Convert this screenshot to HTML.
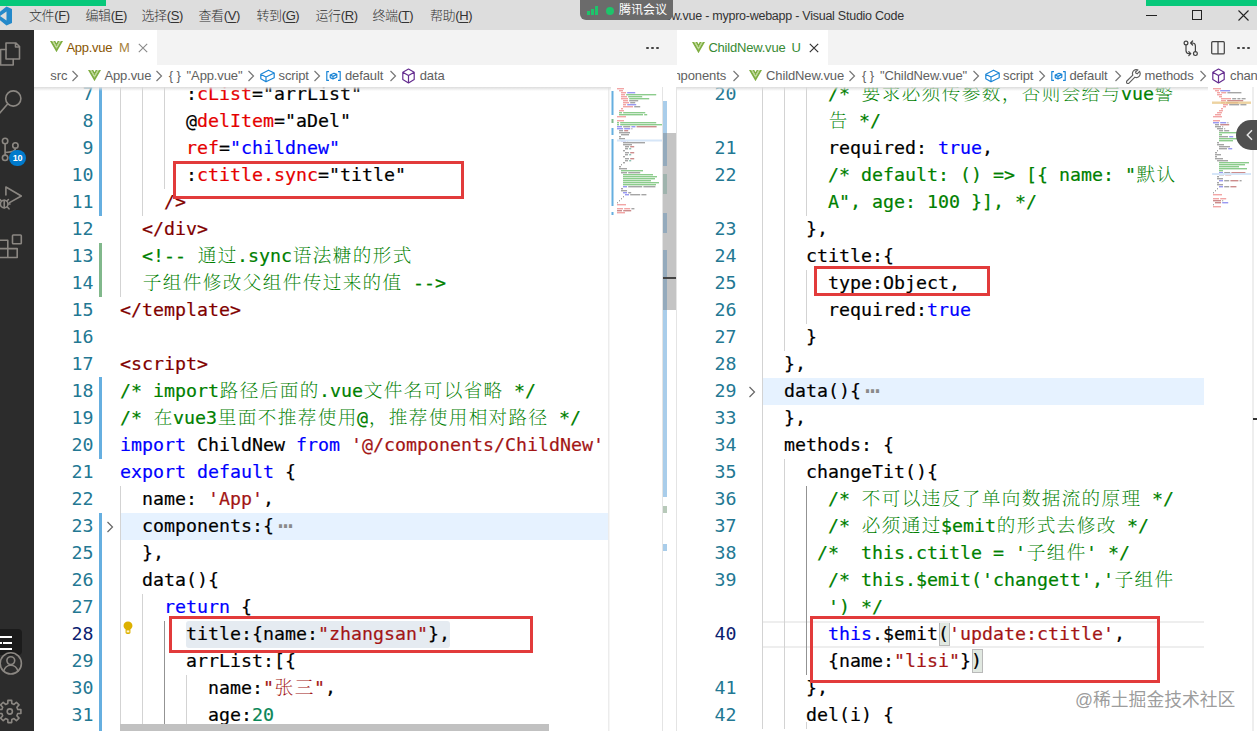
<!DOCTYPE html>
<html lang="zh-CN">
<head>
<meta charset="utf-8">
<title>ChildNew.vue - mypro-webapp - Visual Studio Code</title>
<style>
html,body{margin:0;padding:0}
body{width:1257px;height:731px;overflow:hidden;position:relative;background:#fff;
 font-family:"Liberation Sans","Noto Sans CJK SC",sans-serif;color:#333}
div,span{box-sizing:border-box}
.abs{position:absolute}
/* title bar */
#titlebar{position:absolute;left:0;top:0;width:1257px;height:30px;background:#dddddd}
.menu{position:absolute;top:6px;font-size:13px;line-height:20px;color:#333;font-weight:300;white-space:nowrap;letter-spacing:-0.4px}
.menu u{text-decoration:underline;text-underline-offset:2px}
#wtitle{position:absolute;top:7px;left:628.5px;font-size:12.5px;letter-spacing:-0.25px;line-height:18px;color:#333;white-space:nowrap}
.gbar{position:absolute;top:0;height:5.6px;background:#07c87a}
#meet{position:absolute;left:580px;top:0;width:93px;height:20px;background:#6b6b6b;border-radius:0 0 6px 6px;color:#fff;font-size:12px;line-height:21px;white-space:nowrap}
/* activity bar */
#activity{position:absolute;left:0;top:30px;width:34px;height:701px;background:#2c2c2c;overflow:hidden}
/* tabs */
.tabs{position:absolute;top:30px;height:35px;background:#f3f3f3}
.tab{position:absolute;top:0;height:35px;background:#fff;font-size:13px;line-height:35px;white-space:nowrap}
.crumbs{position:absolute;top:65px;height:22px;background:#fff;font-size:13px;letter-spacing:-0.12px;line-height:22px;color:#616161;white-space:nowrap;overflow:hidden}
.crumbs span.t{position:absolute;top:0}
/* editor */
#ed{position:absolute;left:0;top:87px;width:1257px;height:644px;overflow:hidden}
#edin{position:absolute;left:0;top:-87px;width:1257px;height:731px}
.cl{position:absolute;height:27px;line-height:27px;white-space:pre;font-family:"DejaVu Sans Mono","Noto Serif CJK SC",monospace;font-size:18.27px;color:#000;-webkit-text-stroke:0.2px}
.ln{position:absolute;width:60px;height:27px;line-height:27px;text-align:right;font-family:"DejaVu Sans Mono",monospace;font-size:18.27px;color:#237893}
.ln.act{color:#0b216f}
.k{color:#000}.r{color:#e50000}.b{color:#0000ff}.m{color:#800000}.g{color:#008000}.s{color:#a31515}.n{color:#098658}
.gc{color:#008000;font-size:18.6px;letter-spacing:1.4px;position:relative;left:0.7px;line-height:0;font-weight:200;-webkit-text-stroke:0;font-family:"Noto Serif CJK SC",serif}
.sc{color:#a31515;font-size:18.6px;letter-spacing:1.4px;position:relative;left:0.7px;line-height:0;font-weight:200;-webkit-text-stroke:0;font-family:"Noto Serif CJK SC",serif}
.f{color:#8a8a8a;font-size:25px;line-height:0;margin-left:4px;position:relative;top:2.5px;-webkit-text-stroke:0}
.ig{position:absolute;width:1px;background:#d3d3d3}
.ig.act{background:#939393}
.hl{position:absolute;height:27px}
.redbox{position:absolute;border:3px solid #e23b3b}
.bar{position:absolute;width:3px}
.dot{position:absolute;left:0;top:0;width:2.6px;height:2.6px;border-radius:50%;background:#424242}
</style>
</head>
<body>
<div id="ed"><div id="edin">
<!-- left pane decorations -->
<div class="hl" style="left:120px;top:512.5px;width:488px;background:#e6f2ff"></div>
<div class="hl" style="left:186px;top:620.5px;width:264px;background:#e5ebf1;border-radius:3px"></div>
<div class="bar" style="left:99px;top:80px;height:135.5px;background:#66afe0"></div>
<div class="bar" style="left:99px;top:242.5px;height:54px;background:#81b88b"></div>
<div class="bar" style="left:99px;top:377px;height:81.5px;background:#66afe0"></div>
<div class="bar" style="left:99px;top:512.5px;height:230px;background:#66afe0"></div>
<!-- fold arrows, bulb, bracket match -->
<svg class="abs" style="left:106px;top:520.5px" width="8" height="12" viewBox="0 0 8 12"><path d="M1.5 1 L6.5 6 L1.5 11" fill="none" stroke="#666" stroke-width="1.2"/></svg>
<svg class="abs" style="left:747.5px;top:385.5px" width="8" height="12" viewBox="0 0 8 12"><path d="M1.5 1 L6.5 6 L1.5 11" fill="none" stroke="#666" stroke-width="1.2"/></svg>
<svg class="abs" style="left:123px;top:620.5px" width="10" height="13.6" viewBox="0 0 11 15"><path d="M5.5 0.5 C2.6 0.5 0.6 2.6 0.6 5.2 C0.6 7 1.6 8.2 2.8 9.2 V12.6 C2.8 13.6 3.6 14.4 5.5 14.4 C7.4 14.4 8.2 13.6 8.2 12.6 V9.2 C9.4 8.2 10.4 7 10.4 5.2 C10.4 2.6 8.4 0.5 5.5 0.5 Z" fill="#ddb100"/><rect x="4" y="10.4" width="3" height="2.2" fill="#fff6cf"/></svg>
<div class="abs" style="left:938.5px;top:621.5px;width:11px;height:24.5px;background:#e1e8e1;border:1px solid #b9b9b9"></div>
<div class="abs" style="left:971.5px;top:648.5px;width:11px;height:24.5px;background:#e1e8e1;border:1px solid #b9b9b9"></div>
<div class="ig" style="left:120px;top:80.5px;height:162.0px"></div>
<div class="ig" style="left:142px;top:80.5px;height:135.0px"></div>
<div class="ig" style="left:164px;top:80.5px;height:108.0px"></div>
<div class="ig" style="left:120px;top:242.5px;height:54.0px"></div>
<div class="ig" style="left:120px;top:485.5px;height:243.0px"></div>
<div class="ig" style="left:142px;top:593.5px;height:135.0px"></div>
<div class="ig act" style="left:164px;top:620.5px;height:108.0px"></div>
<div class="ig" style="left:186px;top:674.5px;height:54.0px"></div>
<div class="ln" style="top:79.5px;left:33.5px">7</div>
<div class="cl" style="top:79.5px;left:186px"><span class="k">:</span><span class="r">cList</span><span class="k">="arrList"</span></div>
<div class="ln" style="top:106.5px;left:33.5px">8</div>
<div class="cl" style="top:106.5px;left:186px"><span class="k">@</span><span class="r">delItem</span><span class="k">="aDel"</span></div>
<div class="ln" style="top:133.5px;left:33.5px">9</div>
<div class="cl" style="top:133.5px;left:186px"><span class="r">ref</span><span class="k">=</span><span class="b">"childnew"</span></div>
<div class="ln" style="top:160.5px;left:33.5px">10</div>
<div class="cl" style="top:160.5px;left:186px"><span class="k">:</span><span class="r">ctitle.sync</span><span class="k">="title"</span></div>
<div class="ln" style="top:187.5px;left:33.5px">11</div>
<div class="cl" style="top:187.5px;left:164px"><span class="m">/&gt;</span></div>
<div class="ln" style="top:214.5px;left:33.5px">12</div>
<div class="cl" style="top:214.5px;left:142px"><span class="m">&lt;/div&gt;</span></div>
<div class="ln" style="top:241.5px;left:33.5px">13</div>
<div class="cl" style="top:241.5px;left:142px"><span class="g">&lt;!-- </span><span class="gc">通过</span><span class="g">.sync</span><span class="gc">语法糖的形式</span></div>
<div class="ln" style="top:268.5px;left:33.5px">14</div>
<div class="cl" style="top:268.5px;left:142px"><span class="gc">子组件修改父组件传过来的值</span><span class="g"> --&gt;</span></div>
<div class="ln" style="top:295.5px;left:33.5px">15</div>
<div class="cl" style="top:295.5px;left:120px"><span class="m">&lt;/template&gt;</span></div>
<div class="ln" style="top:322.5px;left:33.5px">16</div>
<div class="ln" style="top:349.5px;left:33.5px">17</div>
<div class="cl" style="top:349.5px;left:120px"><span class="m">&lt;script&gt;</span></div>
<div class="ln" style="top:376.5px;left:33.5px">18</div>
<div class="cl" style="top:376.5px;left:120px"><span class="g">/* import</span><span class="gc">路径后面的</span><span class="g">.vue</span><span class="gc">文件名可以省略</span><span class="g"> */</span></div>
<div class="ln" style="top:403.5px;left:33.5px">19</div>
<div class="cl" style="top:403.5px;left:120px"><span class="g">/* </span><span class="gc">在</span><span class="g">vue3</span><span class="gc">里面不推荐使用</span><span class="g">@</span><span class="gc">，推荐使用相对路径</span><span class="g"> */</span></div>
<div class="ln" style="top:430.5px;left:33.5px">20</div>
<div class="cl" style="top:430.5px;left:120px"><span class="b">import</span><span class="k"> ChildNew </span><span class="b">from</span><span class="k"> </span><span class="s">'@/components/ChildNew'</span></div>
<div class="ln" style="top:457.5px;left:33.5px">21</div>
<div class="cl" style="top:457.5px;left:120px"><span class="b">export default</span><span class="k"> {</span></div>
<div class="ln" style="top:484.5px;left:33.5px">22</div>
<div class="cl" style="top:484.5px;left:142px"><span class="k">name: </span><span class="s">'App'</span><span class="k">,</span></div>
<div class="ln" style="top:511.5px;left:33.5px">23</div>
<div class="cl" style="top:511.5px;left:142px"><span class="k">components:{</span><span class="f">⋯</span></div>
<div class="ln" style="top:538.5px;left:33.5px">25</div>
<div class="cl" style="top:538.5px;left:142px"><span class="k">},</span></div>
<div class="ln" style="top:565.5px;left:33.5px">26</div>
<div class="cl" style="top:565.5px;left:142px"><span class="k">data(){</span></div>
<div class="ln" style="top:592.5px;left:33.5px">27</div>
<div class="cl" style="top:592.5px;left:164px"><span class="b">return</span><span class="k"> {</span></div>
<div class="ln act" style="top:619.5px;left:33.5px">28</div>
<div class="cl" style="top:619.5px;left:186px"><span class="k">title:{name:</span><span class="s">"zhangsan"</span><span class="k">},</span></div>
<div class="ln" style="top:646.5px;left:33.5px">29</div>
<div class="cl" style="top:646.5px;left:186px"><span class="k">arrList:[{</span></div>
<div class="ln" style="top:673.5px;left:33.5px">30</div>
<div class="cl" style="top:673.5px;left:208px"><span class="k">name:</span><span class="s">"</span><span class="sc">张三</span><span class="s">"</span><span class="k">,</span></div>
<div class="ln" style="top:700.5px;left:33.5px">31</div>
<div class="cl" style="top:700.5px;left:208px"><span class="k">age:</span><span class="n">20</span></div>
<!-- right pane decorations -->
<div class="hl" style="left:763px;top:377.5px;width:441px;background:#e6f2ff"></div>
<div class="hl" style="left:763px;top:620.5px;width:441px;height:27px;border-top:2px solid #eee;border-bottom:2px solid #eee"></div>
<div class="ig" style="left:762px;top:80.5px;height:648.0px"></div>
<div class="ig" style="left:784px;top:80.5px;height:270.0px"></div>
<div class="ig" style="left:806px;top:80.5px;height:135.0px"></div>
<div class="ig" style="left:806px;top:269.5px;height:54.0px"></div>
<div class="ig" style="left:784px;top:458.5px;height:270.0px"></div>
<div class="ig act" style="left:806px;top:485.5px;height:189.0px"></div>
<div class="ig" style="left:806px;top:721.5px;height:7.0px"></div>
<div class="ln" style="top:79.5px;left:676.5px">20</div>
<div class="cl" style="top:79.5px;left:828px"><span class="g">/* </span><span class="gc">要求必须传参数，否则会给与</span><span class="g">vue</span><span class="gc">警</span></div>
<div class="cl" style="top:106.5px;left:828px"><span class="gc">告</span><span class="g"> */</span></div>
<div class="ln" style="top:133.5px;left:676.5px">21</div>
<div class="cl" style="top:133.5px;left:828px"><span class="k">required: </span><span class="b">true</span><span class="k">,</span></div>
<div class="ln" style="top:160.5px;left:676.5px">22</div>
<div class="cl" style="top:160.5px;left:828px"><span class="g">/* default: () =&gt; [{ name: "</span><span class="gc">默认</span></div>
<div class="cl" style="top:187.5px;left:828px"><span class="g">A", age: 100 }], */</span></div>
<div class="ln" style="top:214.5px;left:676.5px">23</div>
<div class="cl" style="top:214.5px;left:806px"><span class="k">},</span></div>
<div class="ln" style="top:241.5px;left:676.5px">24</div>
<div class="cl" style="top:241.5px;left:806px"><span class="k">ctitle:{</span></div>
<div class="ln" style="top:268.5px;left:676.5px">25</div>
<div class="cl" style="top:268.5px;left:828px"><span class="k">type:Object,</span></div>
<div class="ln" style="top:295.5px;left:676.5px">26</div>
<div class="cl" style="top:295.5px;left:828px"><span class="k">required:</span><span class="b">true</span></div>
<div class="ln" style="top:322.5px;left:676.5px">27</div>
<div class="cl" style="top:322.5px;left:806px"><span class="k">}</span></div>
<div class="ln" style="top:349.5px;left:676.5px">28</div>
<div class="cl" style="top:349.5px;left:784px"><span class="k">},</span></div>
<div class="ln" style="top:376.5px;left:676.5px">29</div>
<div class="cl" style="top:376.5px;left:784px"><span class="k">data(){</span><span class="f">⋯</span></div>
<div class="ln" style="top:403.5px;left:676.5px">33</div>
<div class="cl" style="top:403.5px;left:784px"><span class="k">},</span></div>
<div class="ln" style="top:430.5px;left:676.5px">34</div>
<div class="cl" style="top:430.5px;left:784px"><span class="k">methods: {</span></div>
<div class="ln" style="top:457.5px;left:676.5px">35</div>
<div class="cl" style="top:457.5px;left:806px"><span class="k">changeTit(){</span></div>
<div class="ln" style="top:484.5px;left:676.5px">36</div>
<div class="cl" style="top:484.5px;left:828px"><span class="g">/* </span><span class="gc">不可以违反了单向数据流的原理</span><span class="g"> */</span></div>
<div class="ln" style="top:511.5px;left:676.5px">37</div>
<div class="cl" style="top:511.5px;left:828px"><span class="g">/* </span><span class="gc">必须通过</span><span class="g">$emit</span><span class="gc">的形式去修改</span><span class="g"> */</span></div>
<div class="ln" style="top:538.5px;left:676.5px">38</div>
<div class="cl" style="top:538.5px;left:817px"><span class="g">/*  this.ctitle = '</span><span class="gc">子组件</span><span class="g">' */</span></div>
<div class="ln" style="top:565.5px;left:676.5px">39</div>
<div class="cl" style="top:565.5px;left:828px"><span class="g">/* this.$emit('changett','</span><span class="gc">子组件</span></div>
<div class="cl" style="top:592.5px;left:828px"><span class="g">') */</span></div>
<div class="ln act" style="top:619.5px;left:676.5px">40</div>
<div class="cl" style="top:619.5px;left:828px"><span class="b">this</span><span class="k">.$emit(</span><span class="s">'update:ctitle'</span><span class="k">,</span></div>
<div class="cl" style="top:646.5px;left:828px"><span class="k">{name:</span><span class="s">"lisi"</span><span class="k">})</span></div>
<div class="ln" style="top:673.5px;left:676.5px">41</div>
<div class="cl" style="top:673.5px;left:806px"><span class="k">},</span></div>
<div class="ln" style="top:700.5px;left:676.5px">42</div>
<div class="cl" style="top:700.5px;left:806px"><span class="k">del(i) {</span></div>
<div class="redbox" style="left:173px;top:160.5px;width:291px;height:38.5px"></div>
<div class="redbox" style="left:169px;top:615.5px;width:364px;height:37px"></div>
<div class="redbox" style="left:814px;top:266px;width:176px;height:30px"></div>
<div class="redbox" style="left:810px;top:616px;width:350px;height:67px"></div>
</div></div>

<!-- minimaps and scrollbars -->
<svg class="abs" style="left:0;top:0;pointer-events:none" width="1257" height="731" viewBox="0 0 1257 731">
<g opacity="0.75">
<rect x="617.0" y="88" width="7.0" height="1.4" fill="#e88"/>
<rect x="619.0" y="90" width="4.0" height="1.4" fill="#e88"/>
<rect x="621.0" y="92" width="5.0" height="1.4" fill="#e88"/>
<rect x="627.2" y="92" width="8.0" height="1.4" fill="#77e"/>
<rect x="621.0" y="94" width="4.0" height="1.4" fill="#e88"/>
<rect x="626.2" y="94" width="30.0" height="1.4" fill="#6b6"/>
<rect x="621.0" y="96" width="6.0" height="1.4" fill="#e88"/>
<rect x="628.2" y="96" width="14.0" height="1.4" fill="#6b6"/>
<rect x="621.0" y="98" width="7.0" height="1.4" fill="#e88"/>
<rect x="629.2" y="98" width="20.0" height="1.4" fill="#6b6"/>
<rect x="623.0" y="100" width="5.0" height="1.4" fill="#e88"/>
<rect x="629.2" y="100" width="9.0" height="1.4" fill="#888"/>
<rect x="623.0" y="102" width="6.0" height="1.4" fill="#e88"/>
<rect x="630.2" y="102" width="5.0" height="1.4" fill="#888"/>
<rect x="623.0" y="104" width="3.0" height="1.4" fill="#e88"/>
<rect x="627.2" y="104" width="9.0" height="1.4" fill="#77e"/>
<rect x="623.0" y="106" width="10.0" height="1.4" fill="#e88"/>
<rect x="634.2" y="106" width="6.0" height="1.4" fill="#888"/>
<rect x="621.0" y="108" width="2.0" height="1.4" fill="#e88"/>
<rect x="619.0" y="110" width="5.0" height="1.4" fill="#e88"/>
<rect x="619.0" y="112" width="3.0" height="1.4" fill="#6b6"/>
<rect x="623.2" y="112" width="22.0" height="1.4" fill="#6b6"/>
<rect x="619.0" y="114" width="24.0" height="1.4" fill="#6b6"/>
<rect x="644.2" y="114" width="3.0" height="1.4" fill="#6b6"/>
<rect x="617.0" y="116" width="9.0" height="1.4" fill="#e88"/>
<rect x="617.0" y="120" width="7.0" height="1.4" fill="#e88"/>
<rect x="617.0" y="122" width="2.0" height="1.4" fill="#6b6"/>
<rect x="620.2" y="122" width="36.0" height="1.4" fill="#6b6"/>
<rect x="617.0" y="124" width="2.0" height="1.4" fill="#6b6"/>
<rect x="620.2" y="124" width="42.0" height="1.4" fill="#6b6"/>
<rect x="617.0" y="126" width="5.0" height="1.4" fill="#77e"/>
<rect x="623.2" y="126" width="7.0" height="1.4" fill="#888"/>
<rect x="631.4" y="126" width="4.0" height="1.4" fill="#77e"/>
<rect x="636.6" y="126" width="20.0" height="1.4" fill="#b66"/>
<rect x="617.0" y="128" width="6.0" height="1.4" fill="#77e"/>
<rect x="624.2" y="128" width="6.0" height="1.4" fill="#77e"/>
<rect x="631.4" y="128" width="1.0" height="1.4" fill="#888"/>
<rect x="619.0" y="130" width="4.0" height="1.4" fill="#888"/>
<rect x="624.2" y="130" width="4.0" height="1.4" fill="#b66"/>
<rect x="619.0" y="132" width="11.0" height="1.4" fill="#888"/>
<rect x="621.0" y="134" width="8.0" height="1.4" fill="#888"/>
<rect x="619.0" y="136" width="2.0" height="1.4" fill="#888"/>
<rect x="619.0" y="138" width="6.0" height="1.4" fill="#888"/>
<rect x="621.0" y="140" width="5.0" height="1.4" fill="#77e"/>
<rect x="627.2" y="140" width="1.0" height="1.4" fill="#888"/>
<rect x="623.0" y="142" width="22.0" height="1.4" fill="#888"/>
<rect x="623.0" y="144" width="9.0" height="1.4" fill="#888"/>
<rect x="625.0" y="146" width="4.0" height="1.4" fill="#888"/>
<rect x="630.2" y="146" width="4.0" height="1.4" fill="#b66"/>
<rect x="625.0" y="148" width="3.0" height="1.4" fill="#888"/>
<rect x="629.2" y="148" width="2.0" height="1.4" fill="#6a9"/>
<rect x="623.0" y="150" width="2.0" height="1.4" fill="#888"/>
<rect x="625.0" y="152" width="4.0" height="1.4" fill="#888"/>
<rect x="630.2" y="152" width="4.0" height="1.4" fill="#b66"/>
<rect x="625.0" y="154" width="3.0" height="1.4" fill="#888"/>
<rect x="629.2" y="154" width="2.0" height="1.4" fill="#6a9"/>
<rect x="623.0" y="156" width="2.0" height="1.4" fill="#888"/>
<rect x="625.0" y="158" width="4.0" height="1.4" fill="#888"/>
<rect x="630.2" y="158" width="4.0" height="1.4" fill="#b66"/>
<rect x="625.0" y="160" width="3.0" height="1.4" fill="#888"/>
<rect x="629.2" y="160" width="2.0" height="1.4" fill="#6a9"/>
<rect x="623.0" y="162" width="2.0" height="1.4" fill="#888"/>
<rect x="621.0" y="164" width="1.0" height="1.4" fill="#888"/>
<rect x="619.0" y="166" width="2.0" height="1.4" fill="#888"/>
<rect x="619.0" y="168" width="8.0" height="1.4" fill="#888"/>
<rect x="621.0" y="170" width="22.0" height="1.4" fill="#6b6"/>
<rect x="621.0" y="172" width="6.0" height="1.4" fill="#888"/>
<rect x="628.2" y="172" width="12.0" height="1.4" fill="#888"/>
<rect x="623.0" y="174" width="30.0" height="1.4" fill="#6b6"/>
<rect x="623.0" y="176" width="34.0" height="1.4" fill="#6b6"/>
<rect x="623.0" y="178" width="32.0" height="1.4" fill="#6b6"/>
<rect x="623.0" y="180" width="28.0" height="1.4" fill="#6b6"/>
<rect x="623.0" y="182" width="36.0" height="1.4" fill="#6b6"/>
<rect x="623.0" y="184" width="33.0" height="1.4" fill="#6b6"/>
<rect x="623.0" y="186" width="4.0" height="1.4" fill="#77e"/>
<rect x="628.2" y="186" width="14.0" height="1.4" fill="#888"/>
<rect x="643.4" y="186" width="12.0" height="1.4" fill="#888"/>
<rect x="621.0" y="188" width="2.0" height="1.4" fill="#888"/>
<rect x="621.0" y="190" width="6.0" height="1.4" fill="#888"/>
<rect x="623.0" y="192" width="4.0" height="1.4" fill="#77e"/>
<rect x="628.2" y="192" width="3.0" height="1.4" fill="#888"/>
<rect x="625.0" y="194" width="4.0" height="1.4" fill="#77e"/>
<rect x="630.2" y="194" width="10.0" height="1.4" fill="#888"/>
<rect x="641.4" y="194" width="5.0" height="1.4" fill="#888"/>
<rect x="623.0" y="196" width="1.0" height="1.4" fill="#888"/>
<rect x="621.0" y="198" width="1.0" height="1.4" fill="#888"/>
<rect x="619.0" y="200" width="1.0" height="1.4" fill="#888"/>
<rect x="617.0" y="202" width="1.0" height="1.4" fill="#888"/>
<rect x="617.0" y="204" width="9.0" height="1.4" fill="#e88"/>
<rect x="617.0" y="208" width="6.0" height="1.4" fill="#e88"/>
<rect x="624.2" y="208" width="6.0" height="1.4" fill="#e88"/>
<rect x="631.4" y="208" width="3.0" height="1.4" fill="#888"/>
<rect x="617.0" y="210" width="5.0" height="1.4" fill="#b66"/>
<rect x="623.2" y="210" width="8.0" height="1.4" fill="#b66"/>
<rect x="617.0" y="212" width="8.0" height="1.4" fill="#e88"/>
<rect x="1213.0" y="88" width="8.0" height="1.4" fill="#e88"/>
<rect x="1215.0" y="90" width="4.0" height="1.4" fill="#e88"/>
<rect x="1220.2" y="90" width="10.0" height="1.4" fill="#77e"/>
<rect x="1217.0" y="92" width="3.0" height="1.4" fill="#e88"/>
<rect x="1221.2" y="92" width="5.0" height="1.4" fill="#e88"/>
<rect x="1227.4" y="92" width="14.0" height="1.4" fill="#888"/>
<rect x="1217.0" y="94" width="5.0" height="1.4" fill="#e88"/>
<rect x="1219.0" y="96" width="3.0" height="1.4" fill="#e88"/>
<rect x="1221.0" y="98" width="10.0" height="1.4" fill="#e88"/>
<rect x="1232.2" y="98" width="4.0" height="1.4" fill="#888"/>
<rect x="1237.4" y="98" width="3.0" height="1.4" fill="#888"/>
<rect x="1241.6" y="98" width="4.0" height="1.4" fill="#888"/>
<rect x="1221.0" y="100" width="5.0" height="1.4" fill="#e88"/>
<rect x="1227.2" y="100" width="16.0" height="1.4" fill="#b66"/>
<rect x="1221.0" y="102" width="4.0" height="1.4" fill="#e88"/>
<rect x="1226.2" y="102" width="12.0" height="1.4" fill="#b66"/>
<rect x="1223.0" y="104" width="5.0" height="1.4" fill="#e88"/>
<rect x="1229.2" y="104" width="10.0" height="1.4" fill="#888"/>
<rect x="1240.4" y="104" width="6.0" height="1.4" fill="#888"/>
<rect x="1223.0" y="106" width="3.0" height="1.4" fill="#e88"/>
<rect x="1221.0" y="108" width="2.0" height="1.4" fill="#e88"/>
<rect x="1219.0" y="110" width="4.0" height="1.4" fill="#e88"/>
<rect x="1217.0" y="112" width="5.0" height="1.4" fill="#e88"/>
<rect x="1215.0" y="114" width="6.0" height="1.4" fill="#e88"/>
<rect x="1213.0" y="116" width="9.0" height="1.4" fill="#e88"/>
<rect x="1213.0" y="120" width="7.0" height="1.4" fill="#e88"/>
<rect x="1213.0" y="122" width="6.0" height="1.4" fill="#77e"/>
<rect x="1220.2" y="122" width="6.0" height="1.4" fill="#77e"/>
<rect x="1227.4" y="122" width="1.0" height="1.4" fill="#888"/>
<rect x="1215.0" y="124" width="4.0" height="1.4" fill="#888"/>
<rect x="1220.2" y="124" width="9.0" height="1.4" fill="#b66"/>
<rect x="1215.0" y="126" width="6.0" height="1.4" fill="#888"/>
<rect x="1222.2" y="126" width="1.0" height="1.4" fill="#888"/>
<rect x="1217.0" y="128" width="6.0" height="1.4" fill="#888"/>
<rect x="1224.2" y="128" width="1.0" height="1.4" fill="#888"/>
<rect x="1219.0" y="130" width="4.0" height="1.4" fill="#888"/>
<rect x="1224.2" y="130" width="5.0" height="1.4" fill="#888"/>
<rect x="1219.0" y="132" width="26.0" height="1.4" fill="#6b6"/>
<rect x="1219.0" y="134" width="3.0" height="1.4" fill="#6b6"/>
<rect x="1219.0" y="136" width="9.0" height="1.4" fill="#888"/>
<rect x="1229.2" y="136" width="4.0" height="1.4" fill="#77e"/>
<rect x="1219.0" y="138" width="24.0" height="1.4" fill="#6b6"/>
<rect x="1219.0" y="140" width="14.0" height="1.4" fill="#6b6"/>
<rect x="1217.0" y="142" width="2.0" height="1.4" fill="#888"/>
<rect x="1217.0" y="144" width="7.0" height="1.4" fill="#888"/>
<rect x="1219.0" y="146" width="11.0" height="1.4" fill="#888"/>
<rect x="1219.0" y="148" width="8.0" height="1.4" fill="#888"/>
<rect x="1228.2" y="148" width="4.0" height="1.4" fill="#77e"/>
<rect x="1217.0" y="150" width="1.0" height="1.4" fill="#888"/>
<rect x="1215.0" y="152" width="2.0" height="1.4" fill="#888"/>
<rect x="1215.0" y="154" width="6.0" height="1.4" fill="#888"/>
<rect x="1215.0" y="156" width="2.0" height="1.4" fill="#888"/>
<rect x="1215.0" y="158" width="8.0" height="1.4" fill="#888"/>
<rect x="1217.0" y="160" width="11.0" height="1.4" fill="#888"/>
<rect x="1219.0" y="162" width="30.0" height="1.4" fill="#6b6"/>
<rect x="1219.0" y="164" width="26.0" height="1.4" fill="#6b6"/>
<rect x="1219.0" y="166" width="20.0" height="1.4" fill="#6b6"/>
<rect x="1219.0" y="168" width="28.0" height="1.4" fill="#6b6"/>
<rect x="1219.0" y="170" width="4.0" height="1.4" fill="#6b6"/>
<rect x="1219.0" y="172" width="4.0" height="1.4" fill="#77e"/>
<rect x="1224.2" y="172" width="6.0" height="1.4" fill="#888"/>
<rect x="1231.4" y="172" width="14.0" height="1.4" fill="#b66"/>
<rect x="1219.0" y="174" width="5.0" height="1.4" fill="#888"/>
<rect x="1225.2" y="174" width="6.0" height="1.4" fill="#b66"/>
<rect x="1217.0" y="176" width="2.0" height="1.4" fill="#888"/>
<rect x="1217.0" y="178" width="6.0" height="1.4" fill="#888"/>
<rect x="1219.0" y="180" width="4.0" height="1.4" fill="#77e"/>
<rect x="1224.2" y="180" width="5.0" height="1.4" fill="#888"/>
<rect x="1230.4" y="180" width="8.0" height="1.4" fill="#b66"/>
<rect x="1239.6" y="180" width="2.0" height="1.4" fill="#888"/>
<rect x="1217.0" y="182" width="2.0" height="1.4" fill="#888"/>
<rect x="1217.0" y="184" width="6.0" height="1.4" fill="#888"/>
<rect x="1219.0" y="186" width="4.0" height="1.4" fill="#77e"/>
<rect x="1224.2" y="186" width="5.0" height="1.4" fill="#888"/>
<rect x="1230.4" y="186" width="6.0" height="1.4" fill="#b66"/>
<rect x="1217.0" y="188" width="1.0" height="1.4" fill="#888"/>
<rect x="1215.0" y="190" width="1.0" height="1.4" fill="#888"/>
<rect x="1213.0" y="192" width="1.0" height="1.4" fill="#888"/>
<rect x="1213.0" y="194" width="9.0" height="1.4" fill="#e88"/>
<rect x="1213.0" y="198" width="6.0" height="1.4" fill="#e88"/>
<rect x="1220.2" y="198" width="6.0" height="1.4" fill="#e88"/>
<rect x="1213.0" y="200" width="8.0" height="1.4" fill="#b66"/>
<rect x="1222.2" y="200" width="1.0" height="1.4" fill="#888"/>
<rect x="1215.0" y="202" width="6.0" height="1.4" fill="#b66"/>
<rect x="1222.2" y="202" width="6.0" height="1.4" fill="#77e"/>
<rect x="1213.0" y="204" width="1.0" height="1.4" fill="#888"/>
<rect x="1213.0" y="206" width="8.0" height="1.4" fill="#e88"/>
</g>
<rect x="611.5" y="91" width="2" height="24" fill="#66afe0"/><rect x="611.5" y="119" width="2" height="4" fill="#81b88b"/>
<rect x="611.5" y="128" width="2" height="7" fill="#66afe0"/><rect x="611.5" y="139" width="2" height="67" fill="#66afe0"/><rect x="611.5" y="212" width="2" height="3" fill="#66afe0"/>
<rect x="617" y="139.5" width="45" height="2" fill="#d6e6f8"/>
<rect x="1212" y="101.5" width="39" height="2.4" fill="#e8c88a" opacity="0.8"/>
<rect x="1212" y="173" width="39" height="2" fill="#d6e6f8"/>
<!-- left scrollbar -->
<rect x="662.5" y="101" width="4.5" height="396" fill="#a9cdea"/>
<rect x="662.5" y="506" width="4.5" height="7" fill="#b7c9b9"/>
<rect x="662.5" y="544" width="4.5" height="7" fill="#a9cdea"/>
<rect x="662.5" y="133" width="14" height="177" fill="#c4c4c4"/>
<rect x="662.5" y="133" width="4.5" height="33" fill="#94aabc"/><rect x="662.5" y="174" width="4.5" height="20" fill="#9fb3ad"/>
<rect x="662.5" y="213" width="4.5" height="20" fill="#94aabc"/><rect x="662.5" y="250" width="4.5" height="60" fill="#94aabc"/>
<rect x="662.5" y="277" width="14" height="2" fill="#444"/>
<rect x="662" y="87" width="1" height="644" fill="#e4e4e4"/>
<rect x="608" y="87" width="1" height="644" fill="#ececec"/><rect x="609" y="87" width="1" height="644" fill="#f6f6f6"/>
<rect x="676" y="30" width="1" height="701" fill="#e4e4e4"/>
<rect x="1252.5" y="87" width="1" height="644" fill="#dedede"/>
<rect x="1253" y="418" width="4" height="2" fill="#333"/>
<!-- bottom scrollbar left -->
<rect x="120" y="724" width="429" height="7" fill="#c1c1c1"/>
<!-- pill -->
<path d="M1257 120 H1251 A15 15 0 0 0 1251 150 H1257 Z" fill="#505050"/>
<path d="M1252 130.3 L1247.3 135 L1252 139.7" fill="none" stroke="#e6e6e6" stroke-width="1.5"/>
</svg>
<div class="abs" id="wm" style="left:1075px;top:686px;font-size:17.8px;line-height:28px;color:rgba(130,130,130,.8);white-space:nowrap;text-shadow:0 0 2px #fff,0 0 2px #fff">@稀土掘金技术社区</div>
<div class="abs" style="left:34px;top:87px;width:577px;height:4px;background:linear-gradient(#dcdcdc,rgba(255,255,255,0))"></div>
<div class="abs" style="left:677px;top:87px;width:531px;height:4px;background:linear-gradient(#dcdcdc,rgba(255,255,255,0))"></div>

<div id="titlebar">
 <svg class="abs" style="left:-9px;top:6px" width="22" height="20" viewBox="0 0 22 20"><path d="M15.5 0.5 L21 3 V17 L15.5 19.5 L5 11 L2 13.3 L0.5 12.4 V7.6 L2 6.7 L5 9 Z M15.5 5.6 L9 10 L15.5 14.4 Z" fill="#2489ca" fill-rule="evenodd"/></svg>
 <div class="gbar" style="left:0;width:106px"></div>
 <div class="gbar" style="left:1146px;width:111px"></div>
 <div class="menu" style="left:29px">文件(<u>F</u>)</div>
 <div class="menu" style="left:85.5px">编辑(<u>E</u>)</div>
 <div class="menu" style="left:141.5px">选择(<u>S</u>)</div>
 <div class="menu" style="left:198.5px">查看(<u>V</u>)</div>
 <div class="menu" style="left:256.5px">转到(<u>G</u>)</div>
 <div class="menu" style="left:315.5px">运行(<u>R</u>)</div>
 <div class="menu" style="left:372.5px">终端(<u>T</u>)</div>
 <div class="menu" style="left:430px">帮助(<u>H</u>)</div>
 <div id="wtitle">ChildNew.vue - mypro-webapp - Visual Studio Code</div>
 <div id="meet">
  <i class="abs" style="left:7px;top:11px;width:2.6px;height:4px;background:#1ec46b"></i>
  <i class="abs" style="left:11px;top:8.5px;width:2.6px;height:6.5px;background:#1ec46b"></i>
  <i class="abs" style="left:15px;top:6px;width:2.6px;height:9px;background:#1ec46b"></i>
  <i class="abs" style="left:25.5px;top:7px;width:8px;height:8px;border-radius:50%;background:#1ec46b"></i>
  <span class="abs" style="left:39px;top:0">腾讯会议</span></div>
 <div class="abs" style="left:1146px;top:15px;width:11px;height:1px;background:#222"></div>
 <div class="abs" style="left:1192px;top:10px;width:10px;height:10px;border:1px solid #222"></div>
 <svg class="abs" style="left:1238px;top:10px" width="11" height="11" viewBox="0 0 11 11"><path d="M0.5 0.5 L10.5 10.5 M10.5 0.5 L0.5 10.5" stroke="#222" stroke-width="1.1" fill="none"/></svg>
</div>

<div id="activity">
<div style="position:absolute;left:-4px;top:598.5px;width:25.5px;height:26px;background:#1b1b1b;border-radius:4px"></div>
<svg width="34" height="701" viewBox="0 0 34 701" style="position:absolute;left:0;top:0" fill="none" stroke="#8b8782" stroke-width="1.6" stroke-linejoin="round" stroke-linecap="round">
 <!-- files -->
 <path d="M6 13 H16 L19.5 16.5 V29 H6 Z M15.5 13.5 V17 H19"/>
 <path d="M6 19.5 H0.6 V35 H13.2 V29.5"/>
 <!-- search -->
 <circle cx="13.3" cy="68.5" r="7.6"/>
 <path d="M7.6 74 L-2 85"/>
 <!-- source control -->
 <circle cx="5.1" cy="111" r="2.7"/>
 <circle cx="15.4" cy="115.5" r="2.7"/>
 <circle cx="5.1" cy="127.8" r="2.7"/>
 <path d="M5.1 113.8 V125 M15.4 118.3 C15.4 122.5 10 122 5.1 122.5"/>
 <!-- debug -->
 <path d="M5.9 165 V157 L21.3 166 L9.5 172.6"/>
 <circle cx="4.2" cy="174" r="3.8"/>
 <path d="M4.2 170.2 V178 M0 169.5 L1.5 171 M8.4 169.5 L7 171 M8 174 H10 M7.3 177 L9 178.8"/>
 <!-- extensions -->
 <rect x="12.5" y="205" width="8.8" height="8.8" rx="0.8"/>
 <path d="M-2 210.2 H7.8 V227.5 M-2 218.6 H17.2 V227.5 H-2"/>
 <!-- account -->
 <circle cx="10.8" cy="633.4" r="10.6"/>
 <circle cx="10.8" cy="630.6" r="3.9"/>
 <path d="M3.6 641.2 C5 636.6 8 635.2 10.8 635.2 C13.6 635.2 16.6 636.6 18 641.2"/>
 <!-- gear -->
 <path d="M17.7 679.5 L20.9 679.6 L20.9 683.4 L17.7 683.5 L16.9 685.7 L19.0 688.1 L16.4 690.7 L14.0 688.6 L11.8 689.4 L11.7 692.6 L7.9 692.6 L7.8 689.4 L5.6 688.6 L3.2 690.7 L0.6 688.1 L2.7 685.7 L1.9 683.5 L-1.3 683.4 L-1.3 679.6 L1.9 679.5 L2.7 677.3 L0.6 674.9 L3.2 672.3 L5.6 674.4 L7.8 673.6 L7.9 670.4 L11.7 670.4 L11.8 673.6 L14.0 674.4 L16.4 672.3 L19.0 674.9 L16.9 677.3Z"/>
 <circle cx="9.8" cy="681.5" r="2.6"/>
</svg>
<div style="position:absolute;left:9.2px;top:119.6px;width:16.4px;height:16.4px;border-radius:50%;background:#007acc;color:#fff;font-size:9px;font-weight:bold;line-height:16.4px;text-align:center;letter-spacing:-0.3px">10</div>
<div style="position:absolute;left:0;top:606px;width:12px;height:2px;background:#fff"></div>
<div style="position:absolute;left:0;top:612px;width:1.5px;height:2px;background:#fff"></div>
<div style="position:absolute;left:3px;top:612px;width:9px;height:2px;background:#fff"></div>
<div style="position:absolute;left:0;top:618px;width:12px;height:2px;background:#fff"></div>
</div>

<div class="tabs" style="left:34px;width:643px">
 <div class="tab" style="left:0;width:123px"><svg class="abs" style="left:15.5px;top:11.2px" width="13" height="11" viewBox="0 0 13 11"><path d="M0 0 L6.5 11.2 L13 0 H10.8 L6.5 7.6 L2.2 0 Z" fill="#7fae42"/><path d="M3.4 0 L6.5 5.6 L9.6 0 H7.7 L6.5 2.2 L5.3 0 Z" fill="#7fae42"/><path d="M2.2 0 L6.5 7.6 L10.8 0 H9.6 L6.5 5.6 L3.4 0 Z" fill="#b5d38a"/></svg><span class="abs" style="left:32.5px;top:0;color:#895503;letter-spacing:-0.3px">App.vue</span><span class="abs" style="left:85px;top:0;color:#a8823c">M</span>
 <svg class="abs" style="left:104px;top:13px" width="10" height="10" viewBox="0 0 10 10"><path d="M0.8 0.8 L9.2 9.2 M9.2 0.8 L0.8 9.2" stroke="#8a8a8a" stroke-width="1.1" fill="none"/></svg></div>
 <div class="abs" style="left:612px;top:16.5px;width:13px;height:3px"><i class="dot"></i><i class="dot" style="left:5px"></i><i class="dot" style="left:10px"></i></div>
</div>
<div class="tabs" style="left:677px;width:580px">
 <div class="tab" style="left:0;width:151px"><svg class="abs" style="left:14.7px;top:11.5px" width="13" height="11" viewBox="0 0 13 11"><path d="M0 0 L6.5 11.2 L13 0 H10.8 L6.5 7.6 L2.2 0 Z" fill="#7fae42"/><path d="M3.4 0 L6.5 5.6 L9.6 0 H7.7 L6.5 2.2 L5.3 0 Z" fill="#7fae42"/><path d="M2.2 0 L6.5 7.6 L10.8 0 H9.6 L6.5 5.6 L3.4 0 Z" fill="#b5d38a"/></svg><span class="abs" style="left:31.4px;top:0;color:#388a34;letter-spacing:-0.2px">ChildNew.vue</span><span class="abs" style="left:114.5px;top:0;color:#388a34">U</span>
 <svg class="abs" style="left:132px;top:13px" width="10" height="10" viewBox="0 0 10 10"><path d="M0.8 0.8 L9.2 9.2 M9.2 0.8 L0.8 9.2" stroke="#333" stroke-width="1.2" fill="none"/></svg></div>
 <!-- actions -->
 <svg class="abs" style="left:506px;top:10px" width="16" height="17" viewBox="0 0 16 17" fill="none" stroke="#424242" stroke-width="1.2" stroke-linecap="round" stroke-linejoin="round">
  <circle cx="3" cy="3" r="1.9"/><circle cx="12.4" cy="13.6" r="1.9"/>
  <path d="M3 5 V10.5 C3 12.6 4.2 13.6 6 13.6 H7.6 M5.8 11.6 L7.8 13.6 L5.8 15.6"/>
  <path d="M12.4 11.6 V6 C12.4 4 11.2 3 9.4 3 H7.8 M9.6 1 L7.6 3 L9.6 5"/>
 </svg>
 <svg class="abs" style="left:534px;top:11px" width="14" height="14" viewBox="0 0 14 14" fill="none" stroke="#424242" stroke-width="1.2" stroke-linejoin="round"><rect x="0.7" y="0.7" width="12.6" height="12.2" rx="1"/><path d="M7 0.7 V12.9"/></svg>
 <div class="abs" style="left:560px;top:16.5px;width:13px;height:3px"><i class="dot"></i><i class="dot" style="left:5px"></i><i class="dot" style="left:10px"></i></div>
</div>
<div class="crumbs" style="left:34px;width:643px">
<span class="t" style="left:16.3px">src</span>
<svg class="abs" style="left:36.6px;top:5px" width="8" height="12" viewBox="0 0 8 12"><path d="M1.5 1 L6.5 6 L1.5 11" fill="none" stroke="#777" stroke-width="1.2"/></svg>
<svg class="abs" style="left:53.5px;top:5.0px" width="13" height="11" viewBox="0 0 13 11"><path d="M0 0 L6.5 11.2 L13 0 H10.8 L6.5 7.6 L2.2 0 Z" fill="#7fae42"/><path d="M3.4 0 L6.5 5.6 L9.6 0 H7.7 L6.5 2.2 L5.3 0 Z" fill="#7fae42"/><path d="M2.2 0 L6.5 7.6 L10.8 0 H9.6 L6.5 5.6 L3.4 0 Z" fill="#b5d38a"/></svg>
<span class="t" style="left:70.4px">App.vue</span>
<svg class="abs" style="left:121.0px;top:5px" width="8" height="12" viewBox="0 0 8 12"><path d="M1.5 1 L6.5 6 L1.5 11" fill="none" stroke="#777" stroke-width="1.2"/></svg>
<span class="t" style="left:134.8px">{ }</span>
<span class="t" style="left:152.6px">"App.vue"</span>
<svg class="abs" style="left:213.4px;top:5px" width="8" height="12" viewBox="0 0 8 12"><path d="M1.5 1 L6.5 6 L1.5 11" fill="none" stroke="#777" stroke-width="1.2"/></svg>
<svg class="abs" style="left:225.5px;top:4px" width="15" height="14" viewBox="0 0 15 14" fill="none" stroke="#1a85d6" stroke-width="1.2" stroke-linejoin="round"><path d="M0.8 5.2 L8.5 1.2 L14.2 4 L14.2 8.8 L6 12.8 L0.8 9.8 Z M0.8 5.2 L6 8 L14.2 4 M6 8 V12.8"/></svg>
<span class="t" style="left:244.5px">script</span>
<svg class="abs" style="left:279.4px;top:5px" width="8" height="12" viewBox="0 0 8 12"><path d="M1.5 1 L6.5 6 L1.5 11" fill="none" stroke="#777" stroke-width="1.2"/></svg>
<svg class="abs" style="left:292.0px;top:6px" width="15" height="10" viewBox="0 0 15 10" fill="none" stroke="#1a85d6" stroke-width="1.2" stroke-linejoin="round"><path d="M3 0.6 H0.8 V9.4 H3 M12 0.6 H14.2 V9.4 H12 M4.2 4 L8 2.2 L10.8 3.4 V6.2 L7 8 L4.2 6.6 Z M4.2 4 L7 5.4 L10.8 3.4 M7 5.4 V8"/></svg>
<span class="t" style="left:311.0px">default</span>
<svg class="abs" style="left:354.6px;top:5px" width="8" height="12" viewBox="0 0 8 12"><path d="M1.5 1 L6.5 6 L1.5 11" fill="none" stroke="#777" stroke-width="1.2"/></svg>
<svg class="abs" style="left:367.7px;top:3px" width="13" height="16" viewBox="0 0 13 16" fill="none" stroke="#652d90" stroke-width="1.2" stroke-linejoin="round"><path d="M6.5 1 L12.2 4.2 V11.6 L6.5 15 L0.8 11.6 V4.2 Z M0.8 4.2 L6.5 7.6 L12.2 4.2 M6.5 7.6 V15"/></svg>
<span class="t" style="left:385.7px">data</span>
</div>
<div class="crumbs" style="left:677px;width:580px">
<span class="t" style="left:-20.6px">components</span>
<svg class="abs" style="left:55.4px;top:5px" width="8" height="12" viewBox="0 0 8 12"><path d="M1.5 1 L6.5 6 L1.5 11" fill="none" stroke="#777" stroke-width="1.2"/></svg>
<svg class="abs" style="left:71.8px;top:5.0px" width="13" height="11" viewBox="0 0 13 11"><path d="M0 0 L6.5 11.2 L13 0 H10.8 L6.5 7.6 L2.2 0 Z" fill="#7fae42"/><path d="M3.4 0 L6.5 5.6 L9.6 0 H7.7 L6.5 2.2 L5.3 0 Z" fill="#7fae42"/><path d="M2.2 0 L6.5 7.6 L10.8 0 H9.6 L6.5 5.6 L3.4 0 Z" fill="#b5d38a"/></svg>
<span class="t" style="left:89.0px">ChildNew.vue</span>
<svg class="abs" style="left:171.0px;top:5px" width="8" height="12" viewBox="0 0 8 12"><path d="M1.5 1 L6.5 6 L1.5 11" fill="none" stroke="#777" stroke-width="1.2"/></svg>
<span class="t" style="left:185.0px">{ }</span>
<span class="t" style="left:203.0px">"ChildNew.vue"</span>
<svg class="abs" style="left:295.4px;top:5px" width="8" height="12" viewBox="0 0 8 12"><path d="M1.5 1 L6.5 6 L1.5 11" fill="none" stroke="#777" stroke-width="1.2"/></svg>
<svg class="abs" style="left:307.6px;top:4px" width="15" height="14" viewBox="0 0 15 14" fill="none" stroke="#1a85d6" stroke-width="1.2" stroke-linejoin="round"><path d="M0.8 5.2 L8.5 1.2 L14.2 4 L14.2 8.8 L6 12.8 L0.8 9.8 Z M0.8 5.2 L6 8 L14.2 4 M6 8 V12.8"/></svg>
<span class="t" style="left:326.0px">script</span>
<svg class="abs" style="left:361.3px;top:5px" width="8" height="12" viewBox="0 0 8 12"><path d="M1.5 1 L6.5 6 L1.5 11" fill="none" stroke="#777" stroke-width="1.2"/></svg>
<svg class="abs" style="left:373.8px;top:6px" width="15" height="10" viewBox="0 0 15 10" fill="none" stroke="#1a85d6" stroke-width="1.2" stroke-linejoin="round"><path d="M3 0.6 H0.8 V9.4 H3 M12 0.6 H14.2 V9.4 H12 M4.2 4 L8 2.2 L10.8 3.4 V6.2 L7 8 L4.2 6.6 Z M4.2 4 L7 5.4 L10.8 3.4 M7 5.4 V8"/></svg>
<span class="t" style="left:392.4px">default</span>
<svg class="abs" style="left:436.5px;top:5px" width="8" height="12" viewBox="0 0 8 12"><path d="M1.5 1 L6.5 6 L1.5 11" fill="none" stroke="#777" stroke-width="1.2"/></svg>
<svg class="abs" style="left:448.5px;top:4px" width="15" height="15" viewBox="0 0 15 15" fill="none" stroke="#616161" stroke-width="1.2" stroke-linejoin="round" stroke-linecap="round"><path d="M13.6 2.4 L11.2 4.8 L10 4.2 L9.5 3 L11.9 0.9 C10.4 0.3 8.6 0.7 7.5 1.9 C6.4 3.1 6.2 4.7 6.8 6.1 L0.9 12 C0.3 12.6 0.3 13.5 0.9 14.1 C1.5 14.7 2.4 14.7 3 14.1 L8.9 8.2 C10.3 8.8 12 8.5 13.1 7.4 C14.3 6.2 14.5 4.2 13.6 2.4 Z"/></svg>
<span class="t" style="left:467.6px">methods</span>
<svg class="abs" style="left:522.0px;top:5px" width="8" height="12" viewBox="0 0 8 12"><path d="M1.5 1 L6.5 6 L1.5 11" fill="none" stroke="#777" stroke-width="1.2"/></svg>
<svg class="abs" style="left:535.3px;top:3px" width="13" height="16" viewBox="0 0 13 16" fill="none" stroke="#652d90" stroke-width="1.2" stroke-linejoin="round"><path d="M6.5 1 L12.2 4.2 V11.6 L6.5 15 L0.8 11.6 V4.2 Z M0.8 4.2 L6.5 7.6 L12.2 4.2 M6.5 7.6 V15"/></svg>
<span class="t" style="left:553.0px">changeTit</span>
</div>
</body>
</html>
